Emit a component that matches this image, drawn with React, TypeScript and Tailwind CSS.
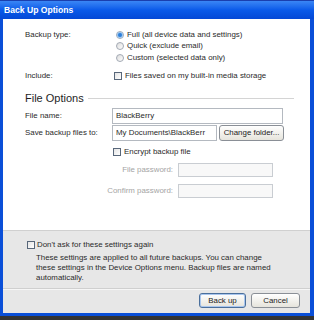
import React from "react";

const Radio = ({ checked }: { checked?: boolean }) => (
  <span className="w-[8px] h-[8px] rounded-full border border-[#a3aab4] bg-gradient-to-br from-[#dcdcdc] to-[#ffffff] flex items-center justify-center shrink-0">
    {checked && <span className="w-[4px] h-[4px] rounded-full bg-[#2f7fd8] shadow-[0_0_1px_1px_#8fc0f0]" />}
  </span>
);

const Check = () => (
  <span className="w-[8px] h-[8px] border border-[#58677a] bg-gradient-to-br from-[#e4e4e4] to-white shrink-0" />
);

const Btn = ({ children, def, className }: { children: React.ReactNode; def?: boolean; className?: string }) => (
  <div
    className={`h-[15px] rounded-[3px] border flex items-center justify-center bg-gradient-to-b from-white to-[#e6e4dc] text-[#222] ${
      def ? "border-[#4a6f9c] shadow-[inset_0_0_0_1px_#a9c6ee]" : "border-[#8a8f96]"
    } ${className ?? ""}`}
  >
    {children}
  </div>
);

export default function App() {
  return (
    <div className="w-[314px] h-[320px] bg-[#343434] overflow-hidden font-['Liberation_Sans',Arial,sans-serif] text-[7.9px] leading-none text-[#2a2a2a]">
      <div className="w-[314px] h-[316px] flex flex-col bg-[#0a4fd8]">
        {/* Title bar */}
        <div className="h-[19px] shrink-0 flex items-center pl-[4px] bg-gradient-to-b from-[#3a86f5] via-[#0a5ae9] to-[#0448d6] border-t border-[#1a3fae]">
          <span className="text-white font-bold text-[8.6px]">Back Up Options</span>
        </div>
        {/* Body */}
        <div className="flex-1 ml-[3px] mr-[4px] mb-[3px] flex flex-col bg-white">
          <div className="flex-1 flex flex-col pl-[22px] pt-[10px]">
            {/* Backup type */}
            <div className="flex">
              <div className="w-[91px] h-[11.5px] flex items-center">Backup type:</div>
              <div className="flex flex-col">
                {[
                  ["Full (all device data and settings)", true],
                  ["Quick (exclude email)", false],
                  ["Custom (selected data only)", false],
                ].map(([t, c]) => (
                  <div key={t as string} className="h-[11.5px] flex items-center gap-[3px]">
                    <Radio checked={c as boolean} />
                    <span>{t as string}</span>
                  </div>
                ))}
              </div>
            </div>
            {/* Include */}
            <div className="flex mt-[6.5px]">
              <div className="w-[89px] h-[11.5px] flex items-center">Include:</div>
              <div className="h-[11.5px] flex items-center gap-[3px]">
                <Check />
                <span>Files saved on my built-in media storage</span>
              </div>
            </div>
            {/* File Options heading */}
            <div className="flex items-center mt-[10px] h-[13px] mr-[16px]">
              <span className="text-[11px] text-[#1e1e1e]">File Options</span>
              <div className="flex-1 h-px bg-[#d4d4d4] ml-[4px]" />
            </div>
            {/* File name */}
            <div className="flex items-center mt-[3.5px] h-[16px]">
              <div className="w-[87px]">File name:</div>
              <div className="w-[171px] h-[16px] border border-[#b4b9c0] bg-white flex items-center pl-[3px]">BlackBerry</div>
            </div>
            {/* Save to */}
            <div className="flex items-center mt-[1px] h-[16px]">
              <div className="w-[87px]">Save backup files to:</div>
              <div className="w-[105px] h-[16px] border border-[#b4b9c0] bg-white flex items-center pl-[3px] overflow-hidden whitespace-nowrap">
                My Documents\BlackBerr
              </div>
              <Btn className="ml-[2px] w-[65px] h-[16px]">Change folder...</Btn>
            </div>
            {/* Encrypt */}
            <div className="flex items-center mt-[5px] h-[11.5px] pl-[88px] gap-[3px]">
              <Check />
              <span>Encrypt backup file</span>
            </div>
            {/* File password */}
            <div className="flex items-center mt-[5.5px] h-[14px]">
              <div className="w-[153px] text-right pr-[5px] text-[#a4a4a4]">File password:</div>
              <div className="w-[95px] h-[14px] border border-[#c9cdd2] bg-[#f8f8f8]" />
            </div>
            <div className="flex items-center mt-[6.5px] h-[14px]">
              <div className="w-[153px] text-right pr-[5px] text-[#a4a4a4]">Confirm password:</div>
              <div className="w-[95px] h-[14px] border border-[#c9cdd2] bg-[#f8f8f8]" />
            </div>
          </div>
          {/* Gray section */}
          <div className="h-[83px] shrink-0 bg-[#e7e7e7] border-t border-[#d0d0d0] flex flex-col">
            <div className="flex items-center gap-[2px] pl-[24px] mt-[9px] h-[10px]">
              <Check />
              <span>Don't ask for these settings again</span>
            </div>
            <div className="pl-[33px] mt-[3px] leading-[10px]">
              These settings are applied to all future backups. You can change
              <br />
              these settings in the Device Options menu. Backup files are named
              <br />
              automatically.
            </div>
            <div className="mt-[5px] h-px bg-[#cfcfcf] border-b border-[#f6f6f6] box-content" />
            <div className="flex justify-end gap-[5px] pr-[10px] mt-[3px]">
              <Btn def className="w-[47px]">Back up</Btn>
              <Btn className="w-[49px]">Cancel</Btn>
            </div>
          </div>
        </div>
      </div>
    </div>
  );
}
